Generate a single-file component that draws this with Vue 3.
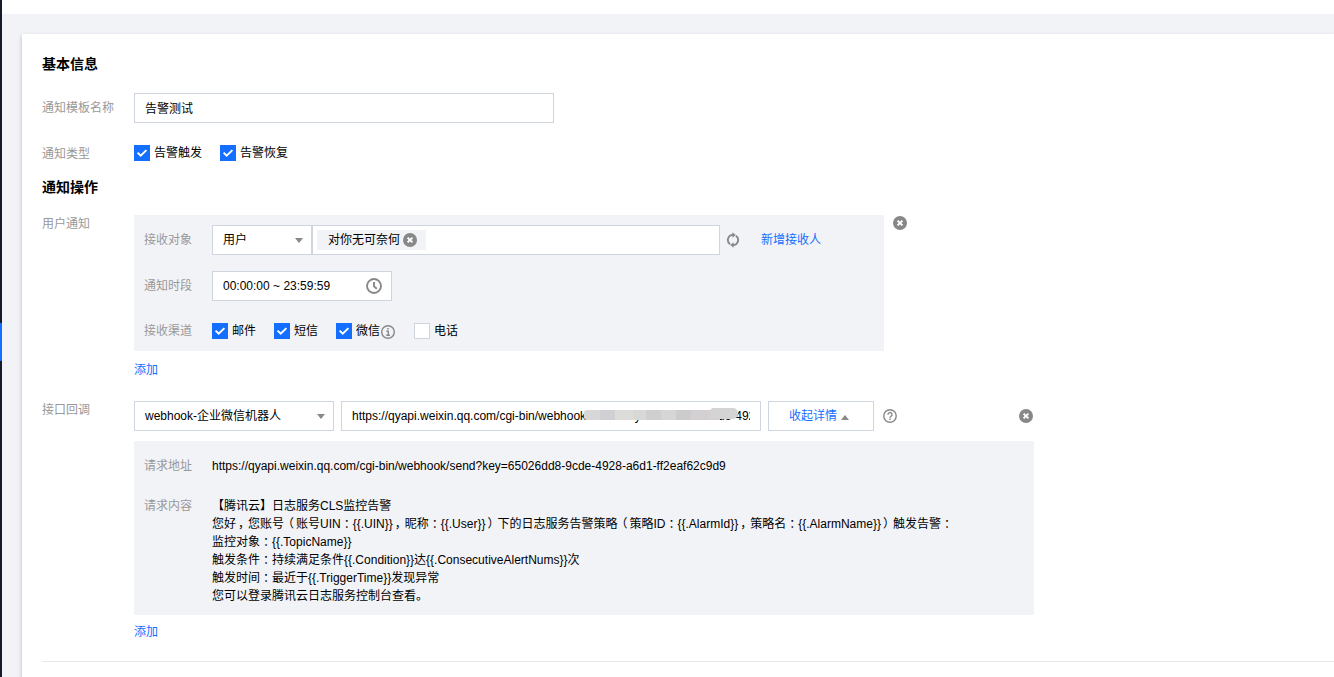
<script setup>
import { ref } from "vue";

const templateName = ref("告警测试");

const noticeTypes = ref([
  { label: "告警触发", checked: true },
  { label: "告警恢复", checked: true },
]);

const channels = ref([
  { label: "邮件", checked: true },
  { label: "短信", checked: true },
  { label: "微信", checked: true, info: true },
  { label: "电话", checked: false },
]);

const webhookUrl = "https://qyapi.weixin.qq.com/cgi-bin/webhook/send?key=65026dd8-9cde-4928-a6d1-ff2eaf62c9d9";

const content = [
  "【腾讯云】日志服务CLS监控告警",
  "您好，您账号（账号UIN：{{.UIN}}，昵称：{{.User}}）下的日志服务告警策略（策略ID：{{.AlarmId}}，策略名：{{.AlarmName}}）触发告警：",
  "监控对象：{{.TopicName}}",
  "触发条件：持续满足条件{{.Condition}}达{{.ConsecutiveAlertNums}}次",
  "触发时间：最近于{{.TriggerTime}}发现异常",
  "您可以登录腾讯云日志服务控制台查看。",
];

// full-width marks get their own cell so they can be centred in it
const markClasses = {
  "，": "mark mark-comma",
  "：": "mark mark-colon",
  "（": "mark mark-open",
  "）": "mark mark-close",
};
const splitMarks = (line) => line.split(/([，：（）])/).filter(Boolean);
</script>

<template>
  <div class="page">
    <aside class="sidebar"><div class="sidebar-active" /></aside>
    <div class="main">
      <header class="topbar" />
      <section class="card">
        <h3 class="title">基本信息</h3>
        <div class="row row-name">
          <label class="label">通知模板名称</label>
          <input v-model="templateName" class="input name-input" type="text" />
        </div>
        <div class="row row-type">
          <label class="label">通知类型</label>
          <div class="checks">
            <label v-for="item in noticeTypes" :key="item.label" class="check">
              <input v-model="item.checked" type="checkbox" />
              <span class="check-box">
                <svg v-if="item.checked" viewBox="0 0 16 16"><path d="M3.6 7.6l3.1 3.1 5.7-5.6" /></svg>
              </span>
              <span>{{ item.label }}</span>
            </label>
          </div>
        </div>

        <h3 class="title title-action">通知操作</h3>
        <div class="row row-user">
          <label class="label">用户通知</label>
          <div>
            <div class="panel-line">
              <div class="panel user-panel">
                <div class="row">
                  <label class="label inner">接收对象</label>
                  <div class="select type-select"><span>用户</span><i class="caret" /></div>
                  <div class="tag-input">
                    <span class="tag">
                      对你无可奈何
                      <svg class="close" viewBox="0 0 14 14"><circle cx="7" cy="7" r="7" /><path d="M4.6 4.6l4.8 4.8M9.4 4.6L4.6 9.4" /></svg>
                    </span>
                  </div>
                  <svg class="refresh" viewBox="0 0 14 16">
                    <path d="M4.1 12.2A5.1 5.1 0 0 1 7 2.9M9.9 3.8A5.1 5.1 0 0 1 7 13.1" />
                    <path class="solid" d="M6.4.2L9.8 3 6.4 5.8zM7.6 10.2v5.6L4.2 13z" />
                  </svg>
                  <a class="link">新增接收人</a>
                </div>
                <div class="row">
                  <label class="label inner">通知时段</label>
                  <div class="select time-select">
                    <span>00:00:00 ~ 23:59:59</span>
                    <svg class="clock" viewBox="0 0 16 16"><circle cx="8" cy="8" r="7" /><path d="M8 4v4.4l2.8 2.4" /></svg>
                  </div>
                </div>
                <div class="row row-channel">
                  <label class="label inner">接收渠道</label>
                  <div class="checks">
                    <label v-for="item in channels" :key="item.label" class="check">
                      <input v-model="item.checked" type="checkbox" />
                      <span class="check-box" :class="{ off: !item.checked }">
                        <svg v-if="item.checked" viewBox="0 0 16 16"><path d="M3.6 7.6l3.1 3.1 5.7-5.6" /></svg>
                      </span>
                      <span>{{ item.label }}</span>
                      <svg v-if="item.info" class="info" viewBox="0 0 14 14">
                        <circle cx="7" cy="7" r="6.3" />
                        <path d="M5.4 6.2h1.9v4M5.2 10.3h3.8M6.2 3.8h1.5" />
                      </svg>
                    </label>
                  </div>
                </div>
              </div>
              <svg class="close" viewBox="0 0 14 14"><circle cx="7" cy="7" r="7" /><path d="M4.6 4.6l4.8 4.8M9.4 4.6L4.6 9.4" /></svg>
            </div>
            <a class="link add">添加</a>
          </div>
        </div>

        <div class="row row-hook">
          <label class="label">接口回调</label>
          <div class="hook">
            <div class="hook-line">
              <div class="select hook-select"><span>webhook-企业微信机器人</span><i class="caret" /></div>
              <div class="input url-input">
                <div class="url-text">{{ webhookUrl }}</div>
                <i class="mask" />
                <i class="mask mask-end" />
              </div>
              <button class="toggle" type="button">收起详情<i class="caret up" /></button>
              <svg class="help" viewBox="0 0 14 14">
                <circle cx="7" cy="7" r="6.2" />
                <path d="M5 5.7a2 2 0 1 1 3 1.6c-.7.4-1 .7-1 1.4M7 9.6v1.4" />
              </svg>
              <svg class="close hook-close" viewBox="0 0 14 14"><circle cx="7" cy="7" r="7" /><path d="M4.6 4.6l4.8 4.8M9.4 4.6L4.6 9.4" /></svg>
            </div>
            <div class="panel detail-panel">
              <div class="row">
                <label class="label inner">请求地址</label>
                <span>{{ webhookUrl }}</span>
              </div>
              <div class="row">
                <label class="label inner">请求内容</label>
                <div class="content">
                  <p v-for="(line, i) in content" :key="i">
                    <span v-for="(part, j) in splitMarks(line)" :key="j" :class="markClasses[part]">{{ part }}</span>
                  </p>
                </div>
              </div>
            </div>
            <a class="link add-hook">添加</a>
          </div>
        </div>
        <hr class="divider" />
      </section>
    </div>
  </div>
</template>

<style>
body {
  margin: 0;
  overflow: hidden;
}
</style>

<style scoped>
.page {
  display: flex;
  height: 677px;
  overflow: hidden;
  font-family: "Liberation Sans", "Noto Sans CJK SC", sans-serif;
  font-size: 12px;
  line-height: 18px;
  color: #000;
  background: #f2f3f7;
}

.sidebar {
  flex: none;
  width: 2px;
  background: #161b2c;
}

.sidebar-active {
  height: 38px;
  margin-top: 323px;
  background: #146eff;
}

.main {
  flex: 1;
  min-width: 0;
}

.topbar {
  height: 14px;
  background: #fff;
}

.card {
  box-sizing: border-box;
  height: 700px;
  margin: 20px 0 0 20px;
  padding: 20px 0 0 20px;
  background: #fff;
  box-shadow: 0 2px 4px rgba(54, 58, 80, 0.32);
}

.title {
  margin: 0;
  font-size: 14px;
  line-height: 20px;
  font-weight: 700;
}

.title-action {
  margin-top: 14px;
}

.row {
  display: flex;
}

.label {
  flex: none;
  width: 92px;
  color: #999;
}

.label.inner {
  width: 68px;
}

.row-name {
  align-items: center;
  margin-top: 19px;
}

.row-type {
  align-items: center;
  height: 20px;
  margin-top: 20px;
}

.row-type .label {
  padding-top: 2px;
}

.row-user {
  margin-top: 18px;
}

.row-hook {
  margin-top: 22px;
}

.input,
.select,
.tag-input,
.toggle {
  box-sizing: border-box;
  height: 30px;
  border: 1px solid #cfd5de;
  border-radius: 0;
  background: #fff;
  color: #000;
  font: inherit;
}

.name-input {
  width: 420px;
  padding: 0 10px 2px;
  outline: none;
}

.checks {
  display: flex;
  gap: 18px;
}

.check {
  display: flex;
  align-items: center;
}

.check input {
  display: none;
}

.check-box {
  box-sizing: border-box;
  width: 16px;
  height: 16px;
  margin-right: 4px;
  background: #146eff;
}

.check-box.off {
  border: 1px solid #cfd5de;
  background: #fff;
}

.check-box svg {
  display: block;
  fill: none;
  stroke: #fff;
  stroke-width: 2;
}

.panel {
  box-sizing: border-box;
  background: #f2f3f7;
}

.panel-line {
  display: flex;
  gap: 9px;
}

.panel-line > .close {
  margin-top: 1px;
}

.user-panel {
  display: flex;
  flex-direction: column;
  gap: 16px;
  width: 750px;
  height: 136px;
  padding: 10px;
}

.user-panel .row {
  flex: none;
  align-items: center;
  height: 30px;
}

.user-panel .row-channel {
  height: 28px;
}

.select {
  display: flex;
  align-items: center;
  justify-content: space-between;
  padding: 0 8px 0 10px;
}

.type-select {
  width: 100px;
}

.time-select {
  width: 180px;
  padding-right: 9px;
}

.hook-select {
  width: 200px;
}

.tag-input {
  display: flex;
  align-items: center;
  width: 408px;
  padding-left: 4px;
}

.tag {
  display: flex;
  align-items: center;
  gap: 3px;
  height: 20px;
  padding: 0 9px 0 11px;
  background: #f2f3f7;
}

.caret {
  border: 4px solid transparent;
  border-top: 5px solid #888;
  border-bottom: 0;
}

.caret.up {
  margin-left: 4px;
  border-top: 0;
  border-bottom: 5px solid #888;
}

.close {
  flex: none;
  width: 14px;
  height: 14px;
  fill: #888;
}

.close path {
  stroke: #fff;
  stroke-width: 2;
}

.refresh {
  width: 14px;
  height: 16px;
  margin-left: 6px;
  fill: none;
  stroke: #888;
  stroke-width: 1.9;
}

.refresh .solid {
  fill: #888;
  stroke: none;
}

.link {
  color: #146eff;
  cursor: pointer;
}

.refresh + .link {
  margin-left: 21px;
}

.clock {
  width: 16px;
  height: 16px;
  fill: none;
  stroke: #888;
  stroke-width: 1.9;
}

.info,
.help {
  width: 14px;
  height: 14px;
  margin-left: 1px;
  fill: none;
  stroke: #888;
  stroke-width: 1.4;
}

.info {
  margin-top: 2px;
  margin-right: 1px;
}

.add {
  display: block;
  margin-top: 10px;
}

.hook {
  width: 900px;
}

.hook-line {
  display: flex;
  align-items: center;
  gap: 7px;
}

.url-input {
  position: relative;
  width: 420px;
  padding: 5px 10px;
}

.url-text {
  overflow: hidden;
  white-space: nowrap;
}

/* blurred-out part of the key */
.mask {
  position: absolute;
  top: 8px;
  left: 242px;
  width: 136px;
  height: 10px;
  border-radius: 3px 0 0 3px;
  background: linear-gradient(
    90deg,
    #d7d7d7 0 16px,
    #d0d0d4 16px 31px,
    #dddcd8 31px 49px,
    #d8d8d6 49px 62px,
    #cfcfd0 62px 77px,
    #d6d6d4 77px 92px,
    #cdcccd 92px 107px,
    #d4cfd2 107px
  );
}

.mask-end {
  top: 6px;
  left: 368px;
  width: 28px;
  height: 11px;
  border-radius: 4px 5px 5px 0;
  background: #d4d4d4;
}

.toggle {
  display: flex;
  align-items: center;
  justify-content: center;
  width: 106px;
  padding: 0 4px 0 0;
  color: #146eff;
}

.toggle .caret {
  margin-top: 2px;
}

.help {
  margin-left: 2px;
}

.hook-close {
  margin-left: auto;
  margin-right: 1px;
}

.detail-panel {
  display: flex;
  flex-direction: column;
  gap: 22px;
  height: 174px;
  margin-top: 10px;
  padding: 16px 10px;
}

.content p {
  margin: 0;
  height: 18px;
  white-space: nowrap;
}

.mark {
  display: inline-block;
  width: 12px;
  height: 18px;
  vertical-align: top;
}

.mark-comma {
  text-indent: 2px;
}

.mark-colon {
  text-indent: 3px;
}

.mark-open {
  text-indent: -2px;
}

.mark-close {
  text-indent: 2px;
}

.add-hook {
  display: block;
  margin-top: 8px;
}

.divider {
  height: 1px;
  margin: 20px 0 0;
  border: 0;
  background: #e7e7e7;
}
</style>
